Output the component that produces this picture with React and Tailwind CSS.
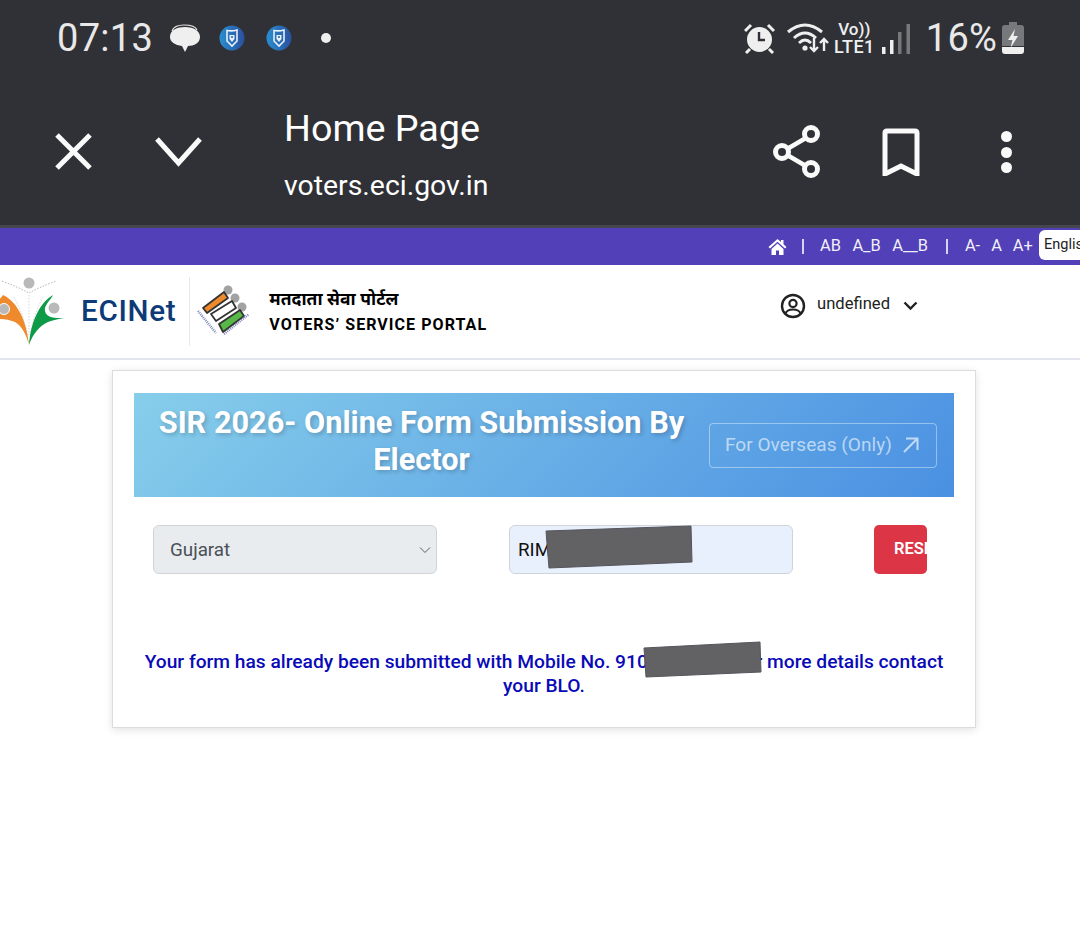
import React from 'react';

const Shield = () => (
  <svg width="26" height="26" viewBox="0 0 26 26">
    <defs>
      <linearGradient id="sh" x1="0" y1="0" x2="1" y2="0">
        <stop offset="0" stopColor="#2a8fd0" />
        <stop offset="1" stopColor="#2b4f9e" />
      </linearGradient>
    </defs>
    <circle cx="13" cy="13" r="12.5" fill="url(#sh)" />
    <path d="M8 5.5 Q13 6.5 18 5 V16 L13 21 L8 16 Z" fill="none" stroke="#e8f0f8" strokeWidth="1.6" />
    <path d="M10.5 10 H15.5 V14 L13 17 L10.5 14 Z" fill="#e8f0f8" />
    <circle cx="13" cy="12" r="1.1" fill="#2a6db0" />
  </svg>
);

const StatusBar = () => (
  <div className="h-[76px] flex items-center pl-[57px] pr-[56px] text-[#e9e9e9]">
    <span className="text-[38px] leading-none font-normal tracking-[0.3px]">07:13</span>
    <svg className="ml-[16px]" width="32" height="32" viewBox="0 0 32 32">
      <path d="M3 9 Q5 3 15 3 Q26 3 28 8" fill="none" stroke="#e9e9e9" strokeWidth="1.2" />
      <path d="M1 15 C1 8 8 5 16 5 C25 5 31 9 31 15 C31 21 25 24 19 24 L16 30 L13 24 C6 23 1 20 1 15 Z" fill="#efefef" />
    </svg>
    <span className="ml-[18px] flex"><Shield /></span>
    <span className="ml-[21px] flex"><Shield /></span>
    <span className="ml-[29px] w-[10px] h-[10px] rounded-full bg-[#efefef]"></span>

    <div className="ml-auto flex items-center">
      <svg width="31" height="31" viewBox="0 0 31 31">
        <circle cx="15.5" cy="16.5" r="12.5" fill="#efefef" />
        <path d="M15 9 V17 H21" fill="none" stroke="#303136" strokeWidth="2.4" />
        <path d="M1 8 L7 2 M30 8 L24 2" stroke="#efefef" strokeWidth="3" />
        <path d="M6 26 L2 30 M25 26 L29 30" stroke="#efefef" strokeWidth="3" />
      </svg>
      <svg className="ml-[12px]" width="42" height="30" viewBox="0 0 42 30">
        <path d="M1 9 Q18 -5 35 9" fill="none" stroke="#efefef" strokeWidth="3" />
        <path d="M7 15 Q18 5 29 15" fill="none" stroke="#efefef" strokeWidth="3" />
        <path d="M12 20 Q18 14 24 20" fill="none" stroke="#efefef" strokeWidth="2.8" />
        <circle cx="18" cy="25" r="2.6" fill="#efefef" />
        <path d="M27 15 V28 M23 24 L27 28 L31 24" fill="none" stroke="#efefef" strokeWidth="2.4" />
        <path d="M37 28 V16 M33 20 L37 16 L41 20" fill="none" stroke="#efefef" strokeWidth="2.4" />
      </svg>
      <div className="ml-[5px] w-[41px] flex flex-col items-center font-['Roboto'] font-medium text-[#efefef]">
        <span className="text-[17px] leading-[17px]">Vo))</span>
        <span className="text-[18px] leading-[17px] tracking-[0.4px]">LTE1</span>
      </div>
      <svg className="ml-[7px]" width="29" height="31" viewBox="0 0 29 31">
        <rect x="0" y="24" width="3.5" height="7" fill="#efefef" />
        <rect x="8" y="17" width="3.5" height="14" fill="#efefef" />
        <rect x="16" y="9" width="3.5" height="22" fill="#77787b" />
        <rect x="24.5" y="1" width="3.5" height="30" fill="#77787b" />
      </svg>
      <span className="ml-[15px] text-[38px] leading-none font-normal tracking-[0.2px]">16%</span>
      <svg className="ml-[5px]" width="22" height="32" viewBox="0 0 22 32">
        <path d="M7 0 H15 V3 H19 Q22 3 22 6 V24 H0 V6 Q0 3 3 3 H7 Z" fill="#77787b" />
        <path d="M0 25 H22 V29 Q22 32 19 32 H3 Q0 32 0 29 Z" fill="#efefef" />
        <path d="M13 7 L6 18 H10.5 L8.5 26 L16 14 H11.5 Z" fill="#efefef" />
      </svg>
    </div>
  </div>
);

const Toolbar = () => (
  <div className="h-[149px] flex items-start text-white">
    <svg className="ml-[54px] mt-[56px]" width="39" height="39" viewBox="0 0 39 39">
      <path d="M3 3 L36 36 M36 3 L3 36" stroke="#fafafa" strokeWidth="5" />
    </svg>
    <svg className="ml-[61px] mt-[60px]" width="49" height="31" viewBox="0 0 49 31">
      <path d="M3 3 L24.5 27 L46 3" fill="none" stroke="#fafafa" strokeWidth="5" />
    </svg>
    <div className="ml-[81px] w-[488px] flex flex-col">
      <span className="text-[37.7px] leading-[46px] mt-[29px] font-normal">Home Page</span>
      <span className="text-[28.4px] leading-[34px] mt-[18px] font-normal">voters.eci.gov.in</span>
    </div>
    <svg className="mt-[48px]" width="50" height="56" viewBox="0 0 50 56">
      <path d="M39 11 L10 28 L39 45" fill="none" stroke="#fafafa" strokeWidth="4.5" />
      <circle cx="39" cy="10" r="6.5" fill="#303136" stroke="#fafafa" strokeWidth="5" />
      <circle cx="10" cy="28" r="6.5" fill="#303136" stroke="#fafafa" strokeWidth="5" />
      <circle cx="39" cy="45" r="6.5" fill="#303136" stroke="#fafafa" strokeWidth="5" />
    </svg>
    <svg className="ml-[60px] mt-[52px]" width="38" height="48" viewBox="0 0 38 48">
      <path d="M3 46 V5 Q3 3 5 3 H33 Q35 3 35 5 V46 L19 38 Z" fill="none" stroke="#fafafa" strokeWidth="5" />
    </svg>
    <div className="ml-[81px] mt-[55px] flex flex-col gap-[4.5px]">
      <span className="w-[11px] h-[11px] rounded-full bg-[#fafafa]"></span>
      <span className="w-[11px] h-[11px] rounded-full bg-[#fafafa]"></span>
      <span className="w-[11px] h-[11px] rounded-full bg-[#fafafa]"></span>
    </div>
  </div>
);

const TopStrip = () => (
  <div className="h-[40px] bg-[#5140b8] border-t-[3px] border-[#46464e] flex items-center relative font-['Roboto'] text-[16.4px] text-[#f2f0fa]">
    <svg className="ml-[768px]" width="19" height="18" viewBox="0 0 19 18">
      <path d="M9.5 1 L0.5 9 L2 10.5 L9.5 3.8 L17 10.5 L18.5 9 L15.5 6.3 V2 H13 V4.1 Z" fill="#fff" />
      <path d="M3.5 11 L9.5 5.6 L15.5 11 V17 H11 V12.5 H8 V17 H3.5 Z" fill="#fff" />
    </svg>
    <span className="ml-[15px] w-[2px] h-[15px] bg-[#d8d4ef]"></span>
    <div className="ml-[16px] flex gap-[11.5px]">
      <span>AB</span>
      <span>A_B</span>
      <span>A__B</span>
    </div>
    <span className="ml-[18px] w-[2px] h-[15px] bg-[#d8d4ef]"></span>
    <div className="ml-[17px] flex gap-[11px]">
      <span>A-</span>
      <span>A</span>
      <span>A+</span>
    </div>
    <div className="absolute left-[1039px] top-[2px] w-[60px] h-[30px] bg-white rounded-l-[6px] pl-[5px] leading-[29px] text-[14.5px] text-[#222] overflow-hidden">
      English
    </div>
  </div>
);

const EciLogo = () => (
  <svg className="shrink-0" width="66" height="70" viewBox="0 0 66 70">
    <path d="M2 4 Q18 10 29 16 Q40 10 56 4" fill="none" stroke="#9a9a9a" strokeWidth="0.8" strokeDasharray="1.5 1.5" />
    <path d="M14 20 Q24 38 28 60 M43 20 Q33 38 30 60 M29 18 V58" fill="none" stroke="#c4c4c4" strokeWidth="0.7" strokeDasharray="1.5 1.5" />
    <circle cx="29" cy="6" r="5.5" fill="#b9b9b9" />
    <path d="M3 18 C14 23 26 38 29 68 C26 57 22 49 15 45 C10 43 5 42 0 42 V22 Z" fill="#ee8a2c" />
    <path d="M53 18 C41 25 31 42 29 68 C33 57 39 49 48 45 C53 43 58 42 64 41 C55 41 46 41 45 34 C44 28 50 24 53 18 Z" fill="#0f9a48" />
    <circle cx="4" cy="32" r="5.5" fill="#b9b9b9" stroke="#fff" strokeWidth="1" />
    <circle cx="54" cy="31" r="5.5" fill="#b9b9b9" />
  </svg>
);

const EvmLogo = () => (
  <svg className="shrink-0" width="56" height="54" viewBox="0 0 56 54">
    <circle cx="31" cy="5" r="4.5" fill="#a2a2a2" />
    <circle cx="38" cy="13" r="4.5" fill="#a2a2a2" />
    <circle cx="45" cy="22" r="4.5" fill="#a2a2a2" />
    <g stroke="#333333" strokeWidth="1.8" strokeLinejoin="round">
      <polygon points="6,23 27,7 31,13 10,28" fill="#ee8a2c" />
      <polygon points="14,29 35,16 39,23 19,36" fill="#ffffff" />
      <polygon points="22,39 43,25 47,31 26,47" fill="#57b848" />
    </g>
    <path d="M1 26 L19 48" fill="none" stroke="#7a86b8" strokeWidth="2.5" strokeDasharray="1 1" />
    <path d="M27 49 L52 29" fill="none" stroke="#7a86b8" strokeWidth="2.5" strokeDasharray="1 1" />
  </svg>
);

const SiteHeader = () => (
  <div className="h-[95px] border-b-2 border-[#e2e4ee] flex items-center font-['Roboto'] relative">
    <EciLogo />
    <span className="ml-[15px] text-[29.6px] font-medium text-[#0c3b78] tracking-[0.7px]">ECINet</span>
    <span className="ml-[13px] w-px h-[69px] bg-[#e8e8e8]"></span>
    <span className="ml-[7px]"><EvmLogo /></span>
    <div className="ml-[16px] flex flex-col text-black font-bold">
      <span className="text-[17.5px] leading-[26px] mb-[1px] font-['Noto_Sans','Noto_Sans_Devanagari',sans-serif]">मतदाता सेवा पोर्टल</span>
      <span className="text-[16px] leading-[26px] tracking-[1.05px]">VOTERS’ SERVICE PORTAL</span>
    </div>
    <div className="absolute left-[780px] top-[27px] flex items-center text-[#222]">
      <svg width="26" height="26" viewBox="0 0 26 26">
        <circle cx="13" cy="13" r="11" fill="none" stroke="#222" strokeWidth="2.4" />
        <circle cx="13" cy="10.5" r="3.6" fill="none" stroke="#222" strokeWidth="2.2" />
        <path d="M5.5 20.5 Q7 16.5 13 16.5 Q19 16.5 20.5 20.5" fill="none" stroke="#222" strokeWidth="2.2" />
      </svg>
      <span className="ml-[11px] text-[16.6px] leading-[24px] mb-[3px]">undefined</span>
      <svg className="ml-[13px]" width="15" height="10" viewBox="0 0 15 10">
        <path d="M1.5 1.5 L7.5 7.5 L13.5 1.5" fill="none" stroke="#222" strokeWidth="2.4" />
      </svg>
    </div>
  </div>
);

const Smudge = ({ className, width, height, points }) => (
  <svg className={className} width={width} height={height} viewBox={`0 0 ${width} ${height}`}>
    <polygon points={points} fill="#626265" stroke="#55555c" strokeWidth="1" strokeLinejoin="round" />
  </svg>
);

const FormCard = () => (
  <div className="relative ml-[112px] mt-[10px] w-[864px] h-[358px] bg-white border border-[#dcdcdc] shadow-[0_2px_8px_rgba(0,0,0,0.12)] px-[21px] pt-[22px] font-['Roboto']">
    <div className="h-[104px] flex items-center bg-[linear-gradient(135deg,#87ceeb,#4a90e2)] pr-[17px]">
      <h1 className="w-[575px] shrink-0 text-center text-[30.7px] leading-[37px] font-bold text-white [text-shadow:2px_2px_4px_rgba(0,0,0,0.2)] px-[20px] mb-[8px]">
        SIR 2026- Online Form Submission By Elector
      </h1>
      <div className="w-[228px] h-[45px] ml-auto border border-white/40 rounded-[4px] flex items-center pl-[15px] text-[19.1px] text-white/60">
        For Overseas (Only)
        <svg className="ml-[10px]" width="18" height="18" viewBox="0 0 18 18">
          <path d="M2 16 L15 3 M4 2.5 H15.5 V14" fill="none" stroke="#ffffff" strokeOpacity="0.65" strokeWidth="2" />
        </svg>
      </div>
    </div>

    <div className="flex mt-[28px] ml-[19px] h-[49px]">
      <div className="w-[284px] bg-[#e9ecef] border border-[#ced4da] rounded-[6px] flex items-center pl-[16px] pr-[5px] text-[18.8px] text-[#495057]">
        <span className="mt-[1px]">Gujarat</span>
        <svg className="ml-auto" width="12" height="8" viewBox="0 0 12 8">
          <path d="M1 1.5 L6 6.5 L11 1.5" fill="none" stroke="#5a5f66" strokeWidth="1" />
        </svg>
      </div>
      <div className="w-[284px] ml-[72px] bg-[#e8f0fe] border border-[#ced4da] rounded-[6px] flex items-center pl-[8px] text-[18.8px] text-[#111]">
        <span className="mt-[1px]">RIM</span>
      </div>
      <div className="w-[53px] ml-[81px] bg-[#dc3545] rounded-[5px] overflow-hidden flex items-center pl-[20px] text-[16.5px] font-semibold text-white">
        RESET
      </div>
    </div>

    <p className="mt-[76px] px-[2px] text-center text-[19.2px] leading-[24px] font-medium text-[#0a0ab8]">
      Your form has already been submitted with Mobile No. 9100000000. For more details contact your BLO.
    </p>

    <Smudge className="absolute left-[432px] top-[154px]" width="148" height="45" points="1,6 146,1 147,37 4,43" />
    <Smudge className="absolute left-[530px] top-[270px]" width="120" height="38" points="1,7 117,1 118,31 3,36" />
  </div>
);

export default function App() {
  return (
    <div className="w-[1080px] h-[931px] overflow-hidden bg-white font-['Roboto']">
      <div className="bg-[#303136]">
        <StatusBar />
        <Toolbar />
      </div>
      <TopStrip />
      <SiteHeader />
      <FormCard />
    </div>
  );
}
